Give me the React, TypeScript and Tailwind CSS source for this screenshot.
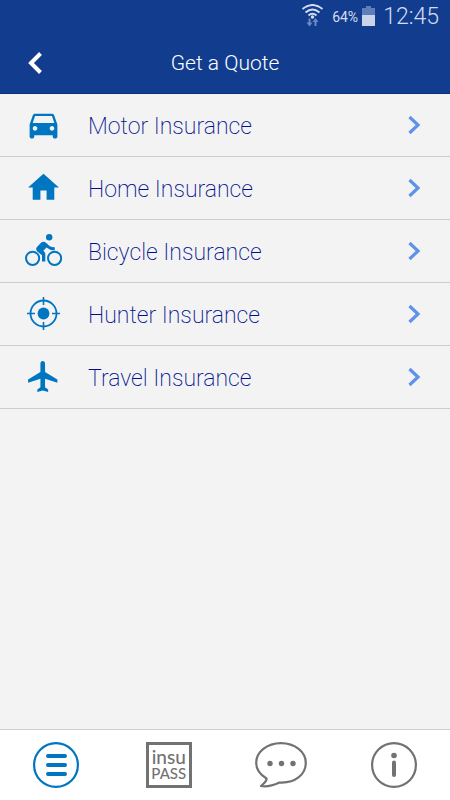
import type { ReactNode } from "react";

const BLUE = "#0075c2";

type QuoteItem = {
  label: string;
  icon: ReactNode;
};

function GlyphIcon({ d }: { d: string }) {
  return (
    <svg viewBox="0 0 24 24" className="size-[37px]" fill={BLUE}>
      <path d={d} />
    </svg>
  );
}

function BicycleIcon() {
  return (
    <svg viewBox="0 0 37 37" className="size-[37px]" fill={BLUE}>
      <g fill="none" stroke={BLUE} strokeWidth="2">
        <circle cx="7.6" cy="26.3" r="6.6" />
        <circle cx="29.6" cy="26.3" r="6.6" />
      </g>
      <circle cx="24.2" cy="5.3" r="3.2" />
      <path d="M12 15L16 10.800Q18.500 8.800 21 10.800L24.500 14Q26.500 15.200 29.700 15.200V18.200Q25 18.500 21.500 15.500L18.300 18.700L19.500 19.900Q20.300 20.700 20.300 22V29.500H17V23.200L12.300 19.500Q10.200 17.300 12 15Z" />
    </svg>
  );
}

function TargetIcon() {
  return (
    <svg viewBox="0 0 37 37" className="size-[37px]" fill="none" stroke={BLUE}>
      <circle cx="18.5" cy="18.5" r="13" strokeWidth="1.8" />
      <circle cx="18.5" cy="18.5" r="5.9" fill={BLUE} stroke="none" />
      <path d="M18.5 2v8M18.5 27v8M2 18.5h8M27 18.5h8" strokeWidth="1.6" />
    </svg>
  );
}

const items: QuoteItem[] = [
  {
    label: "Motor Insurance",
    icon: (
      <GlyphIcon d="M18.92 6.01C18.72 5.42 18.16 5 17.5 5h-11c-.66 0-1.21.42-1.42 1.01L3 12v8c0 .55.45 1 1 1h1c.55 0 1-.45 1-1v-1h12v1c0 .55.45 1 1 1h1c.55 0 1-.45 1-1v-8l-2.08-5.99zM6.5 16c-.83 0-1.5-.67-1.5-1.5S5.67 13 6.5 13s1.5.67 1.5 1.5S7.33 16 6.5 16zm11 0c-.83 0-1.5-.67-1.5-1.5s.67-1.5 1.5-1.5 1.5.67 1.5 1.5-.67 1.5-1.5 1.5zM5 11l1.5-4.5h11L19 11H5z" />
    ),
  },
  {
    label: "Home Insurance",
    icon: <GlyphIcon d="M10 20v-6h4v6h5v-8h3L12 3 2 12h3v8z" />,
  },
  { label: "Bicycle Insurance", icon: <BicycleIcon /> },
  { label: "Hunter Insurance", icon: <TargetIcon /> },
  {
    label: "Travel Insurance",
    icon: (
      <GlyphIcon d="M21 16v-2l-8-5V3.500c0-.83-.67-1.500-1.500-1.500S10 2.670 10 3.500V9l-8 5v2l8-2.500V19l-2 1.500V22l3.500-1 3.500 1v-1.500L13 19v-5.500l8 2.500z" />
    ),
  },
];

function StatusBar() {
  return (
    <div className="flex h-8 items-center justify-end pr-[11px] text-[#d3dcf0]">
      <svg viewBox="0 0 23 24" className="mr-2 h-6 w-[23px]" fill="none">
        <g stroke="#d3dcf0" strokeWidth="2">
          <path d="M1.500 5Q11.500-3 21.500 5" />
          <path d="M4.500 8.500Q11.500 2.500 18.500 8.500" />
          <path d="M7.500 11.500Q11.500 8 15.500 11.500" />
        </g>
        <circle cx="11.500" cy="13" r="1.700" fill="#d3dcf0" />
        <path
          d="M8.500 14.500v6M14.500 22v-6"
          stroke="#6d88c2"
          strokeWidth="2"
        />
        <path d="M5.500 18.500h6l-3 4zM11.500 18h6l-3-4z" fill="#6d88c2" />
      </svg>
      <span className="pt-px text-sm">64%</span>
      <svg viewBox="0 0 13 20" className="mx-1 h-5 w-[13px]">
        <path d="M4 0h5v2h4v18H0V2h4z" fill="#5f7dbb" />
        <path d="M0 9h13v11H0z" fill="#c9d4ea" />
      </svg>
      <span className="ml-1 pt-0.5 text-[23px] leading-8 font-light">
        12:45
      </span>
    </div>
  );
}

function TabBar() {
  return (
    <nav className="grid h-[71px] grid-cols-4 border-t border-[#cfcfcf] bg-white">
      <button aria-label="Menu" className="flex items-center justify-center">
        <svg viewBox="0 0 46 46" className="size-[46px]" fill="none" stroke={BLUE}>
          <circle cx="23" cy="23" r="21.900" strokeWidth="2.200" />
          <path
            d="M15 14h17M15 23h17M15 32h17"
            strokeWidth="4"
            strokeLinecap="round"
          />
        </svg>
      </button>
      <button className="flex items-center justify-center">
        <span className="block size-[46px] border-3 border-[#727272] pt-[3px] text-center font-[Lato,sans-serif] font-medium text-[#727272]">
          <span className="block text-[19px] leading-[18px]">insu</span>
          <span className="block text-[15px] leading-[14px]">PASS</span>
        </span>
      </button>
      <button aria-label="Chat" className="flex items-center justify-center">
        <svg viewBox="0 0 52 46" className="h-[46px] w-[52px]" fill="none">
          <path
            d="M26 1.200C12 1.200 1.200 10 1.200 21C1.200 27.500 5 32.500 11.500 36.500C12 39.500 9 41 6 44C13 45.500 19 43 24.500 40.500C40 41.500 50.800 32.500 50.800 21C50.800 10 40 1.200 26 1.200Z"
            stroke="#727272"
            strokeWidth="2.200"
            strokeLinejoin="round"
          />
          <g fill="#727272">
            <circle cx="15" cy="21.500" r="2.700" />
            <circle cx="26.500" cy="21.500" r="2.700" />
            <circle cx="38" cy="21.500" r="2.700" />
          </g>
        </svg>
      </button>
      <button aria-label="Info" className="flex items-center justify-center">
        <svg viewBox="0 0 46 46" className="size-[46px]" fill="none" stroke="#727272">
          <circle cx="23" cy="23" r="21.900" strokeWidth="2.200" />
          <circle cx="23" cy="13.500" r="2.800" fill="#727272" stroke="none" />
          <path d="M23 20.500v12.500" strokeWidth="4" strokeLinecap="round" />
        </svg>
      </button>
    </nav>
  );
}

export default function App() {
  return (
    <div className="flex min-h-screen flex-col bg-[#f3f3f3] font-[Roboto,sans-serif]">
      <header className="border-b border-[#0b2f7d] bg-[#123d8f] text-white">
        <StatusBar />
        <div className="grid h-[61px] grid-cols-[64px_1fr_64px] items-center">
          <button aria-label="Back" className="flex h-full items-center pl-7">
            <svg
              viewBox="0 0 14 22"
              className="h-[22px] w-[14px]"
              fill="none"
              stroke="white"
              strokeWidth="4"
            >
              <path d="M12.500 1.500L3 11l9.500 9.500" />
            </svg>
          </button>
          <h1 className="pt-0.5 text-center text-[21px] font-light">
            Get a Quote
          </h1>
        </div>
      </header>
      <main className="flex-1">
        <ul>
          {items.map((item) => (
            <li key={item.label} className="border-b border-[#cdcdcd]">
              <button className="flex h-[62px] w-full items-center pr-7 pl-[25px] text-left">
                <span className="pb-px">{item.icon}</span>
                <span className="ml-[26px] flex-1 pt-1 text-[23px] font-extralight text-[#00108c]">
                  {item.label}
                </span>
                <svg
                  viewBox="0 0 14 20"
                  className="h-5 w-[14px]"
                  fill="none"
                  stroke="#5f92ea"
                  strokeWidth="3.200"
                >
                  <path d="M1.500 2L10 10l-8.500 8" />
                </svg>
              </button>
            </li>
          ))}
        </ul>
      </main>
      <TabBar />
    </div>
  );
}
